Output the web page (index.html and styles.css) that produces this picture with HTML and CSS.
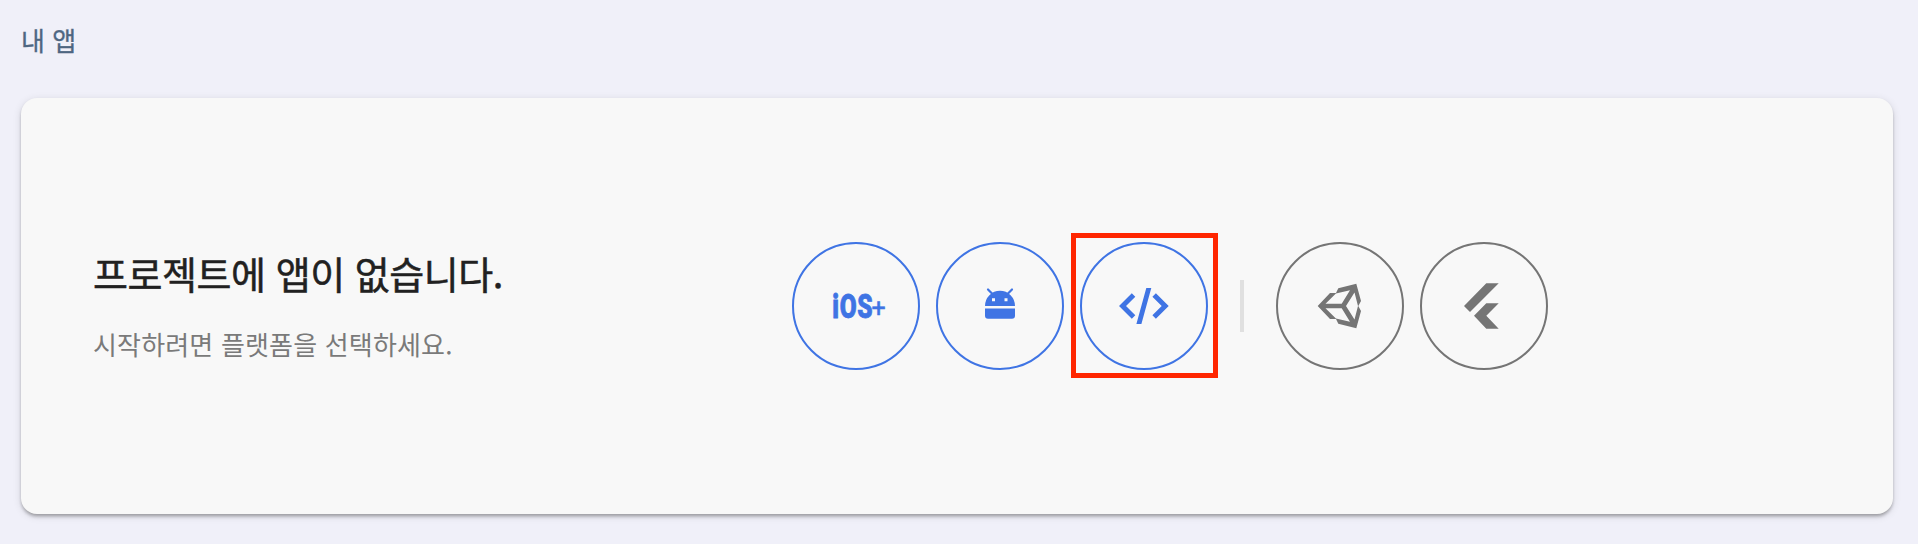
FILE: index.html
```html
<!DOCTYPE html>
<html lang="ko">
<head>
<meta charset="utf-8">
<title>내 앱</title>
<link rel="stylesheet" href="styles.css">
</head>
<body>
<h2 class="section-title">내 앱</h2>
<main class="card">
  <div class="intro">
    <h1 class="headline">프로젝트에 앱이 없습니다.</h1>
    <p class="hint">시작하려면 플랫폼을 선택하세요.</p>
  </div>
  <div class="platforms">
    <button class="platform" aria-label="iOS+">
      <svg class="icon" viewBox="0 0 64 64">
        <text class="ios" transform="translate(8.3 44) scale(.72 1)"><tspan x="0">i</tspan><tspan x="10.4">O</tspan><tspan x="34.5">S</tspan></text>
        <text class="plus" x="47.5" y="43">+</text>
      </svg>
    </button>
    <button class="platform" aria-label="Android">
      <svg class="icon" viewBox="0 0 64 64">
        <path fill-rule="evenodd" d="M17 32a15 15.3 0 0 1 30 0ZM24 24.2h3v3h-3ZM36.5 24.2h3v3h-3ZM17 34.5h30v7.2a3 3 0 0 1-3 3H20a3 3 0 0 1-3-3Z"/>
        <path class="antenna" d="M20 15.5l5 5M44 15.5l-5 5"/>
      </svg>
    </button>
    <div class="marked">
      <button class="platform" aria-label="Web">
        <svg class="icon" viewBox="0 0 64 64">
          <path d="M7 32 19.8 19.2 23.3 22.7 14 32 23.3 41.3 19.8 44.8ZM56.7 32 43.9 19.2 40.4 22.7 49.7 32 40.4 41.3 43.9 44.8ZM34.3 14h5L29.4 50h-5Z"/>
        </svg>
      </button>
    </div>
    <span class="divider"></span>
    <button class="platform muted" aria-label="Unity">
      <svg class="icon" viewBox="0 0 64 64">
        <path fill-rule="evenodd" d="M9.7 32 22 19H28L30.3 14.3 48.3 9.7 53 27 50.3 32 53 37 48.3 54.3 30.3 49.7 28 45H22ZM17.5 29.7H33.7L42 16.3 27.9 19.6ZM17.5 34.3H33.7L42 47.7 27.9 44.4ZM38 32 46.5 18.5 50 32 46.5 45.5Z"/>
      </svg>
    </button>
    <button class="platform muted" aria-label="Flutter">
      <svg class="icon" viewBox="0 0 64 64">
        <path d="M12 32 34.3 9.3H46.7L18 38ZM22 41.7 34.3 29.3H46.7L34.3 41.7 46.7 54.7H34.3Z"/>
      </svg>
    </button>
  </div>
</main>
</body>
</html>
```
FILE: styles.css
```css
* { box-sizing: border-box; }
body {
  margin: 0;
  padding: 20px 25px 30px 21px;
  height: 544px;
  display: flex;
  flex-direction: column;
  background: #f0f0f9;
  font-family: "Noto Sans CJK KR", sans-serif;
}
.section-title {
  margin: 0;
  height: 78px;
  font-size: 26px;
  line-height: 40px;
  font-weight: 400;
  color: #4e6682;
  -webkit-text-stroke: .3px currentColor;
}
.card {
  flex: 1;
  display: flex;
  align-items: center;
  padding-left: 72px;
  background: #f8f8f8;
  border-radius: 16px;
  box-shadow: 0 4px 4px -2px rgba(0,0,0,.2), 0 2px 3px rgba(0,0,0,.14), 0 2px 8px rgba(0,0,0,.12);
}
.intro { width: 699px; }
.headline {
  margin: 0;
  font-size: 38px;
  line-height: 56px;
  font-weight: 400;
  letter-spacing: -.46px;
  color: #212121;
  -webkit-text-stroke: .5px currentColor;
}
.hint {
  margin: 23px 0 3px;
  font-size: 26px;
  line-height: 40px;
  font-weight: 400;
  letter-spacing: .17px;
  color: #7a7a7a;
}
.platforms {
  display: flex;
  align-items: center;
  gap: 16px;
}
.platform {
  width: 128px;
  height: 128px;
  padding: 0;
  display: grid;
  place-items: center;
  background: none;
  border: 2px solid currentColor;
  border-radius: 50%;
  color: #3f74e4;
}
.muted { color: #757575; }
.icon { width: 64px; height: 64px; fill: currentColor; }
.antenna { fill: none; stroke: currentColor; stroke-width: 2.2; stroke-linecap: round; }
.ios { font: 900 34px Roboto, sans-serif; stroke: currentColor; stroke-width: .8; }
.plus { font: 400 25px Roboto, sans-serif; stroke: currentColor; stroke-width: .5; }
.marked { position: relative; }
.marked::after {
  content: "";
  position: absolute;
  inset: -9px -10px -8px -9px;
  border: 5px solid #ff2600;
  pointer-events: none;
}
.divider {
  width: 4px;
  height: 52px;
  margin: 0 16px;
  background: #e0e0e0;
}
```
